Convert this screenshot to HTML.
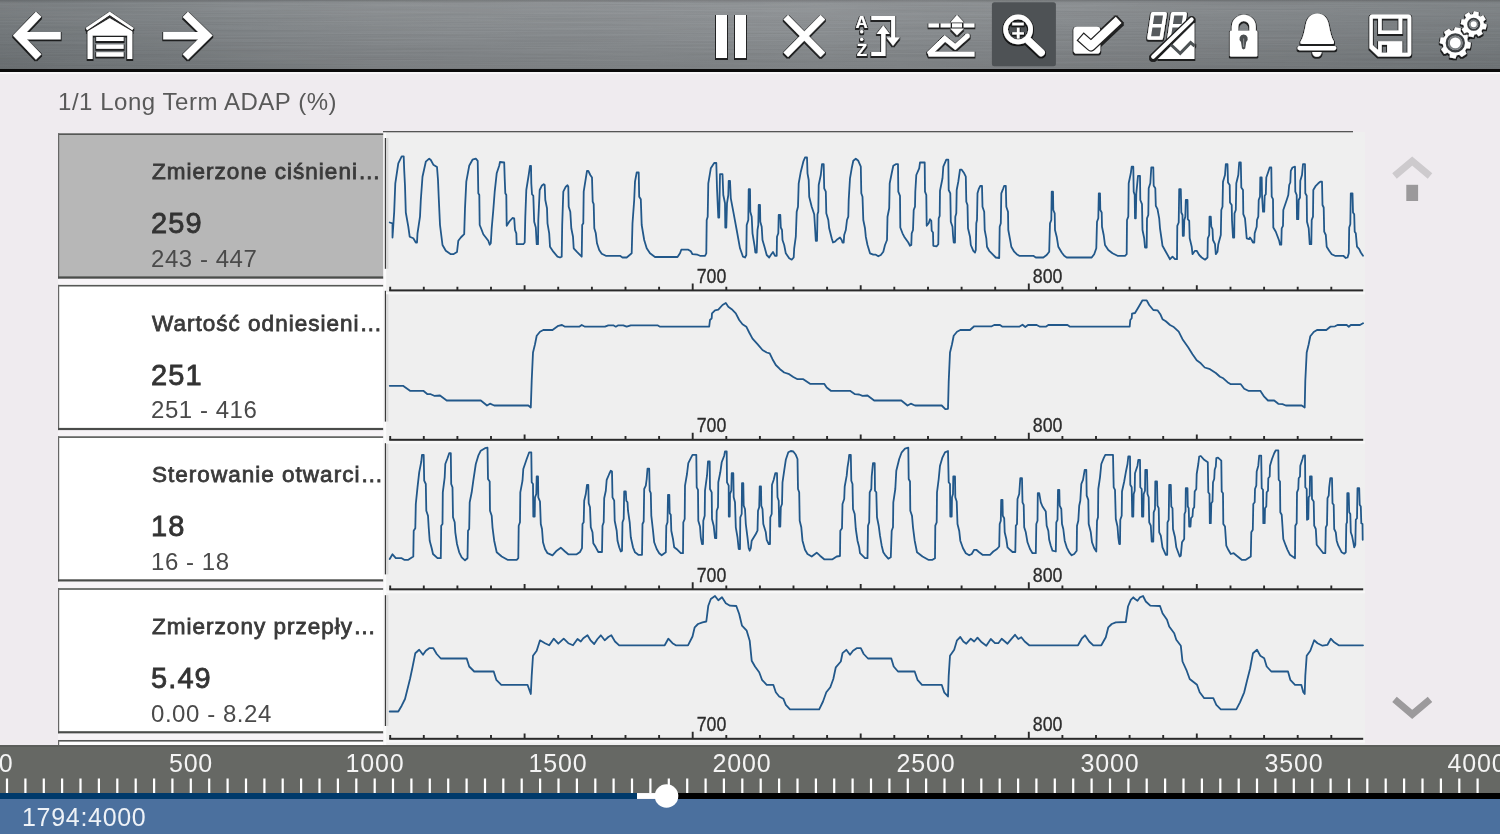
<!DOCTYPE html>
<html lang="pl">
<head>
<meta charset="utf-8">
<title>1/1 Long Term ADAP (%)</title>
<style>
html,body{margin:0;padding:0}
body{width:1500px;height:834px;overflow:hidden;position:relative;background:#efebef;font-family:"Liberation Sans",sans-serif;color:#333}
#title,.panel div,#ruler span,#status span{will-change:transform}
#toolbar{position:absolute;left:0;top:0;width:1500px;height:70px;background:linear-gradient(rgba(0,0,0,.18),rgba(0,0,0,0) 3px),linear-gradient(rgba(255,255,255,.07),rgba(255,255,255,0) 45%,rgba(0,0,0,.09)),linear-gradient(90deg,#767b7e 0,#7c8184 8%,#898d90 25%,#8e9295 55%,#868a8d 75%,#7b8083 100%)}
#tbline{position:absolute;left:0;top:69px;width:1500px;height:3px;background:#0b0b0b}
#tbhl{position:absolute;left:0;top:72px;width:1500px;height:2px;background:#f8f6f8}
#title{position:absolute;left:58px;top:87px;font-size:24px;line-height:30px;color:#595959;white-space:nowrap;letter-spacing:.54px}
.panel{position:absolute;left:58px;width:325px;height:145px}
.panel .nm{position:absolute;left:94px;top:25px;font-size:22.5px;line-height:28px;letter-spacing:1.02px;-webkit-text-stroke:.8px #3a3a3a;color:#3a3a3a;white-space:nowrap}
.panel .val{position:absolute;left:93px;top:72.8px;font-size:29px;line-height:34px;letter-spacing:1.1px;-webkit-text-stroke:.8px #333;color:#333;white-space:nowrap}
.panel .rng{position:absolute;left:93px;top:111.6px;font-size:24px;line-height:28px;letter-spacing:.55px;color:#4a4a4a;white-space:nowrap}
#chartbg{position:absolute;left:386px;top:132px;width:979px;height:613px;background:#efefef}
#ruler{position:absolute;left:0;top:745px;width:1500px;height:48px;background:linear-gradient(#5b5d5a,#5b5d5a 1.5px,#666864 2.5px)}
#ruler span{position:absolute;top:3px;font-size:25px;line-height:30px;color:#f4f4f4;white-space:nowrap;transform:translateX(-50%);letter-spacing:.8px}
#status{position:absolute;left:0;top:799px;width:1500px;height:35px;background:#4b709e}
#status span{position:absolute;left:22px;top:3px;font-size:25px;line-height:30px;letter-spacing:.7px;color:#eef2f7}
svg{position:absolute;left:0;top:0}
</style>
</head>
<body>
<div id="toolbar"></div>
<svg width="1500" height="70" viewBox="0 0 1500 70" style="opacity:.05"><filter id="br" x="0" y="0" width="100%" height="100%"><feTurbulence type="fractalNoise" baseFrequency="0.006 0.7" numOctaves="2" seed="7"/><feColorMatrix type="matrix" values="0 0 0 0 0  0 0 0 0 0  0 0 0 0 0  2.2 0 0 0 -0.6"/></filter><rect width="1500" height="70" filter="url(#br)"/></svg>
<div id="tbline"></div><div id="tbhl"></div>
<svg width="1500" height="72" viewBox="0 0 1500 72">
<defs><filter id="sh" x="-10%" y="-10%" width="125%" height="125%"><feMorphology in="SourceAlpha" operator="dilate" radius="0.55" result="d"/><feGaussianBlur in="d" stdDeviation="0.5" result="b"/><feOffset in="b" dx="0.35" dy="0.6" result="o"/><feComponentTransfer in="o" result="s"><feFuncA type="linear" slope="0.75"/></feComponentTransfer><feMerge><feMergeNode in="s"/><feMergeNode in="SourceGraphic"/></feMerge></filter><clipPath id="c88"><polygon points="1140,5 1201.5,5 1155.2,50 1140,50"/></clipPath></defs>
<rect x="991.9" y="2.2" width="64" height="64" rx="2.5" fill="#4e5255"/>
<g filter="url(#sh)" fill="#fff" stroke="none">
<path d="M38.6 14.3L18.2 35.6L38.6 56.9M18 35.6H60.6" fill="none" stroke="#fff" stroke-width="7.4" stroke-linejoin="miter" stroke-miterlimit="6"/>
<path d="M185.4 14.3L207.2 35.6L185.4 56.9M207.4 35.6H163.3" fill="none" stroke="#fff" stroke-width="7.4" stroke-linejoin="miter" stroke-miterlimit="6"/>
<path d="M86.6 29.2L109.7 13.6L132.8 29.2" fill="none" stroke="#fff" stroke-width="2.9"/>
<path d="M87 31.3L109.7 16.1L132.6 31.3" fill="none" stroke="#2c2c2c" stroke-width="1.5" filter="none"/>
<path d="M87.7 59V31.2L109.7 18.2L132.2 31.2V59H127.3V35.6H92.5V59Z"/>
<path d="M96.3 36.9h27.2v4.2h-27.2zM96.3 44.6h27.2v4.2h-27.2zM96.3 52.3h27.2v4.3h-27.2z"/>
<rect x="716" y="15" width="11" height="43"/><rect x="735" y="15" width="11" height="43"/>
<path d="M785.8 17.3L822.8 54.8M822.8 17.3L785.8 54.8" fill="none" stroke="#fff" stroke-width="6.3"/>
<text x="861.6" y="27.6" text-anchor="middle" font-family="Liberation Sans, sans-serif" font-weight="bold" font-size="17">A</text>
<text x="861.9" y="56" text-anchor="middle" font-family="Liberation Sans, sans-serif" font-weight="bold" font-size="17">Z</text>
<circle cx="861.7" cy="31.7" r="1.6"/><circle cx="861.7" cy="39.3" r="1.6"/>
<path d="M871.4 16.1H895.1V37.6H899.6L893 45.8L886.6 37.6H891.2V20H871.4Z"/>
<path d="M928.6 23.6h10.3v3.6h-10.3zM940.8 23.6h9.7v3.6h-9.7zM952 23.6h10v3.6h-10zM963.8 23.6h10.5v3.6h-10.5z"/>
<path d="M957 15L963.6 22.2H950.6ZM957 35.2L963.6 28.7H950.6Z"/>
<path d="M974.4 54.05H928.9L944.8 38.5" fill="none" stroke="#fff" stroke-width="4.7" stroke-linejoin="bevel"/>
<path d="M928.9 54.05L944.8 38.5L955.2 46.9L967.4 35.9" fill="none" stroke="#fff" stroke-width="4.7" stroke-linejoin="miter" stroke-miterlimit="8"/>
<circle cx="967.4" cy="35.9" r="2.35"/>
<circle cx="1018.1" cy="29.4" r="12.5" fill="none" stroke="#fff" stroke-width="4.7"/>
<path d="M1029 41.2L1041.2 52.6" fill="none" stroke="#fff" stroke-width="7.3" stroke-linecap="round"/>
<path d="M1012.3 22.8h11.4v2.4h-11.4zM1012.3 32.3h11.6v2.3h-11.6zM1016.9 27.8h2.6v10.8h-2.6z"/>
</g>
<g filter="url(#sh)" fill="#fff"><path d="M871.4 56H885.4V34H889.6L883.3 25.6L876.6 34H881.2V52H871.4Z"/></g>
<g filter="url(#sh)">
<rect x="1073.6" y="26.8" width="26.6" height="26.8" rx="3.4" fill="#fff"/>
<path d="M1080.1 36.4L1091 46L1119.6 19.1" fill="none" stroke="#222" stroke-width="10.8" stroke-linejoin="round"/>
<path d="M1081 37.2L1091 46L1118.7 19.9" fill="none" stroke="#fff" stroke-width="8.4" stroke-linejoin="round"/>
</g>
<g filter="url(#sh)">
<g clip-path="url(#c88)"><path d="M1152.7 13.8L1165.1 13.8L1161.2 38.0L1149.0 38.0ZM1150.8 25.8L1163.2 25.8M1172.7 13.8L1185.1 13.8L1181.2 38.0L1169.0 38.0ZM1170.8 25.8L1183.2 25.8" fill="#565a5d" stroke="#fff" stroke-width="3.6" stroke-linejoin="round"/></g>
<path d="M1158 58.9H1194.3V22.9Z" fill="#fff"/>
<path d="M1171.3 45L1180.2 53.3L1190.6 42.6L1194.6 46" fill="none" stroke="#4e5255" stroke-width="3"/>
<path d="M1153.2 56.8L1191.6 19.5" fill="none" stroke="#1c1c1c" stroke-width="6.0" stroke-linecap="round"/>
<path d="M1153.2 56.8L1191.6 19.5" fill="none" stroke="#fff" stroke-width="4.2" stroke-linecap="round"/>
</g>
<g filter="url(#sh)">
<path d="M1235 31.5V26.7A8.8 8.8 0 0 1 1252.6 26.7V31.5" fill="none" stroke="#fff" stroke-width="6.4"/>
<rect x="1229.9" y="30.8" width="27.4" height="25.6" rx="1.2" fill="#fff"/>
</g>
<path d="M1243.6 34.6a4.1 4.1 0 0 1 2.6 7.3L1245.2 48.6L1243.6 49.6L1242 48.6L1241 41.9a4.1 4.1 0 0 1 2.6-7.3Z" fill="#4a4e50"/>
<path d="M1243.6 38.5v8.6" stroke="#85898b" stroke-width="1.2" fill="none"/>
<g filter="url(#sh)" fill="#fff">
<path d="M1300.6 41.6C1303.2 37.6 1304.6 31 1305.7 25C1307.2 17 1311.8 13.6 1317.3 13.6C1322.8 13.6 1327.3 17 1328.8 25C1329.9 31 1331.3 37.6 1333.9 41.6Q1334.7 44.1 1332.3 44.1H1302.2Q1299.8 44.1 1300.6 41.6Z"/>
<rect x="1297.5" y="45.9" width="38.8" height="4.3" rx="2.1"/>
<path d="M1312.2 52H1321.6Q1321 56.8 1316.9 56.8Q1312.8 56.8 1312.2 52Z"/>
</g>
<g filter="url(#sh)">
<path fill="#fff" fill-rule="evenodd" d="M1372.5 14.6H1408.2Q1411.2 14.6 1411.2 17.6V53.4Q1411.2 56.4 1408.2 56.4H1378.2L1369.5 48.2V17.6Q1369.5 14.6 1372.5 14.6ZM1372.8 18.6H1378.1V34.1H1402.2V18.6H1407.6V52.8H1402.2V41.3H1378.1V50L1372.8 45.2ZM1381.7 18.6H1398.6V30.5H1381.7ZM1381.7 44.8H1387.1V52.8H1381.7Z"/>
</g>
<g filter="url(#sh)">
<path fill="#fff" d="M1467.7 41.6 L1470.9 42.7 L1469.9 48.4 L1466.6 48.3 L1465.0 50.8 L1466.5 53.8 L1461.7 57.1 L1459.4 54.7 L1456.6 55.3 L1455.5 58.5 L1449.8 57.5 L1449.9 54.2 L1447.4 52.6 L1444.4 54.1 L1441.1 49.3 L1443.5 47.0 L1442.9 44.2 L1439.7 43.1 L1440.7 37.4 L1444.0 37.5 L1445.6 35.0 L1444.1 32.0 L1448.9 28.7 L1451.2 31.1 L1454.0 30.5 L1455.1 27.3 L1460.8 28.3 L1460.7 31.6 L1463.2 33.2 L1466.2 31.7 L1469.5 36.5 L1467.1 38.8Z"/></g><g filter="url(#sh)"><path fill="#fff" d="M1483.8 23.6 L1486.7 24.6 L1485.7 29.3 L1482.6 29.0 L1481.3 31.0 L1482.7 33.7 L1478.6 36.3 L1476.7 33.9 L1474.4 34.4 L1473.4 37.3 L1468.7 36.3 L1469.0 33.2 L1467.0 31.9 L1464.3 33.3 L1461.7 29.2 L1464.1 27.3 L1463.6 25.0 L1460.7 24.0 L1461.7 19.3 L1464.8 19.6 L1466.1 17.6 L1464.7 14.9 L1468.8 12.3 L1470.7 14.7 L1473.0 14.2 L1474.0 11.3 L1478.7 12.3 L1478.4 15.4 L1480.4 16.7 L1483.1 15.3 L1485.7 19.4 L1483.3 21.3Z"/></g>
<circle cx="1455.3" cy="42.9" r="8.4" fill="none" stroke="#3c4043" stroke-width="2.5"/>
<circle cx="1455.3" cy="42.9" r="6.4" fill="none" stroke="#7b7f82" stroke-width="1.9"/>
<circle cx="1473.7" cy="24.3" r="5.5" fill="none" stroke="#3c4043" stroke-width="2.1"/>
<circle cx="1473.7" cy="24.3" r="3.8" fill="none" stroke="#7b7f82" stroke-width="1.5"/>
</svg>
<div id="title">1/1 Long Term ADAP (%)</div>
<div id="chartbg"></div>
<svg width="1500" height="834" viewBox="0 0 1500 834"><rect x="58" y="133.4" width="325.4" height="145.4" fill="#b7b7b7"/><rect x="58" y="133.4" width="325.4" height="1.6" fill="#555755"/><rect x="58" y="133.4" width="1.2" height="145.4" fill="#666"/><rect x="58" y="276.4" width="325.4" height="2.4" fill="#4a4c4a"/><rect x="58" y="278.8" width="325.4" height="6.2" fill="#f7f4f7"/><rect x="58" y="284.9" width="325.4" height="145.4" fill="#fff"/><rect x="58" y="284.9" width="325.4" height="1.6" fill="#555755"/><rect x="58" y="284.9" width="1.2" height="145.4" fill="#666"/><rect x="58" y="427.9" width="325.4" height="2.4" fill="#4a4c4a"/><rect x="58" y="430.3" width="325.4" height="6.2" fill="#f7f4f7"/><rect x="58" y="436.3" width="325.4" height="145.4" fill="#fff"/><rect x="58" y="436.3" width="325.4" height="1.6" fill="#555755"/><rect x="58" y="436.3" width="1.2" height="145.4" fill="#666"/><rect x="58" y="579.3" width="325.4" height="2.4" fill="#4a4c4a"/><rect x="58" y="581.7" width="325.4" height="6.2" fill="#f7f4f7"/><rect x="58" y="588.2" width="325.4" height="145.4" fill="#fff"/><rect x="58" y="588.2" width="325.4" height="1.6" fill="#555755"/><rect x="58" y="588.2" width="1.2" height="145.4" fill="#666"/><rect x="58" y="731.2" width="325.4" height="2.4" fill="#4a4c4a"/><rect x="58" y="733.6" width="325.4" height="6.2" fill="#f7f4f7"/><rect x="58" y="740.0" width="325.4" height="8.0" fill="#fff"/><rect x="58" y="740.0" width="325.4" height="1.6" fill="#555755"/><rect x="58" y="740.0" width="1.2" height="8.0" fill="#666"/></svg>
<div class="panel" style="top:133.4px"><div class="nm">Zmierzone ciśnieni…</div><div class="val">259</div><div class="rng">243 - 447</div></div>
<div class="panel" style="top:284.9px"><div class="nm">Wartość odniesieni…</div><div class="val">251</div><div class="rng">251 - 416</div></div>
<div class="panel" style="top:436.3px"><div class="nm">Sterowanie otwarci…</div><div class="val">18</div><div class="rng">16 - 18</div></div>
<div class="panel" style="top:588.2px"><div class="nm">Zmierzony przepły…</div><div class="val">5.49</div><div class="rng">0.00 - 8.24</div></div>
<svg width="1500" height="834" viewBox="0 0 1500 834">
<rect x="383.4" y="132" width="2.8" height="613" fill="#fbfbfb"/>
<rect x="383" y="131" width="970" height="1.3" fill="#555"/>
<rect x="384.8" y="138.0" width="1.3" height="130.8" fill="#3c3c3c"/>
<rect x="386.2" y="138.0" width="2.2" height="130.8" fill="#d9d9d9"/>
<rect x="384.8" y="290.8" width="1.3" height="130.8" fill="#3c3c3c"/>
<rect x="386.2" y="290.8" width="2.2" height="130.8" fill="#d9d9d9"/>
<rect x="384.8" y="443.2" width="1.3" height="131.2" fill="#3c3c3c"/>
<rect x="386.2" y="443.2" width="2.2" height="131.2" fill="#d9d9d9"/>
<rect x="384.8" y="595.2" width="1.3" height="130.8" fill="#3c3c3c"/>
<rect x="386.2" y="595.2" width="2.2" height="130.8" fill="#d9d9d9"/>
<rect x="386" y="291.7" width="979" height="2.6" fill="#f7f7f7"/>
<rect x="389.2" y="289.4" width="974" height="2" fill="#2a2a2a"/>
<path d="M390.2 290.4v-3.7M423.8 290.4v-3.7M457.4 290.4v-3.7M491.0 290.4v-3.7M524.6 290.4v-5.2M558.2 290.4v-3.7M591.9 290.4v-3.7M625.5 290.4v-3.7M659.1 290.4v-3.7M692.7 290.4v-7.0M726.3 290.4v-3.7M759.9 290.4v-3.7M793.5 290.4v-3.7M827.1 290.4v-3.7M860.7 290.4v-5.2M894.3 290.4v-3.7M928.0 290.4v-3.7M961.6 290.4v-3.7M995.2 290.4v-3.7M1028.8 290.4v-7.0M1062.4 290.4v-3.7M1096.0 290.4v-3.7M1129.6 290.4v-3.7M1163.2 290.4v-3.7M1196.8 290.4v-5.2M1230.5 290.4v-3.7M1264.1 290.4v-3.7M1297.7 290.4v-3.7M1331.3 290.4v-3.7" stroke="#2a2a2a" stroke-width="1.9" fill="none"/>
<text x="696.7" y="282.8" font-family="Liberation Sans, sans-serif" font-size="21" textLength="29.6" lengthAdjust="spacingAndGlyphs" fill="#2c2c2c" stroke="#2c2c2c" stroke-width="0.35">700</text>
<text x="1032.8" y="282.8" font-family="Liberation Sans, sans-serif" font-size="21" textLength="29.6" lengthAdjust="spacingAndGlyphs" fill="#2c2c2c" stroke="#2c2c2c" stroke-width="0.35">800</text>
<rect x="386" y="441.1" width="979" height="2.6" fill="#f7f7f7"/>
<rect x="389.2" y="438.8" width="974" height="2" fill="#2a2a2a"/>
<path d="M390.2 439.8v-3.7M423.8 439.8v-3.7M457.4 439.8v-3.7M491.0 439.8v-3.7M524.6 439.8v-5.2M558.2 439.8v-3.7M591.9 439.8v-3.7M625.5 439.8v-3.7M659.1 439.8v-3.7M692.7 439.8v-7.0M726.3 439.8v-3.7M759.9 439.8v-3.7M793.5 439.8v-3.7M827.1 439.8v-3.7M860.7 439.8v-5.2M894.3 439.8v-3.7M928.0 439.8v-3.7M961.6 439.8v-3.7M995.2 439.8v-3.7M1028.8 439.8v-7.0M1062.4 439.8v-3.7M1096.0 439.8v-3.7M1129.6 439.8v-3.7M1163.2 439.8v-3.7M1196.8 439.8v-5.2M1230.5 439.8v-3.7M1264.1 439.8v-3.7M1297.7 439.8v-3.7M1331.3 439.8v-3.7" stroke="#2a2a2a" stroke-width="1.9" fill="none"/>
<text x="696.7" y="432.2" font-family="Liberation Sans, sans-serif" font-size="21" textLength="29.6" lengthAdjust="spacingAndGlyphs" fill="#2c2c2c" stroke="#2c2c2c" stroke-width="0.35">700</text>
<text x="1032.8" y="432.2" font-family="Liberation Sans, sans-serif" font-size="21" textLength="29.6" lengthAdjust="spacingAndGlyphs" fill="#2c2c2c" stroke="#2c2c2c" stroke-width="0.35">800</text>
<rect x="386" y="590.6" width="979" height="2.6" fill="#f7f7f7"/>
<rect x="389.2" y="588.3" width="974" height="2" fill="#2a2a2a"/>
<path d="M390.2 589.3v-3.7M423.8 589.3v-3.7M457.4 589.3v-3.7M491.0 589.3v-3.7M524.6 589.3v-5.2M558.2 589.3v-3.7M591.9 589.3v-3.7M625.5 589.3v-3.7M659.1 589.3v-3.7M692.7 589.3v-7.0M726.3 589.3v-3.7M759.9 589.3v-3.7M793.5 589.3v-3.7M827.1 589.3v-3.7M860.7 589.3v-5.2M894.3 589.3v-3.7M928.0 589.3v-3.7M961.6 589.3v-3.7M995.2 589.3v-3.7M1028.8 589.3v-7.0M1062.4 589.3v-3.7M1096.0 589.3v-3.7M1129.6 589.3v-3.7M1163.2 589.3v-3.7M1196.8 589.3v-5.2M1230.5 589.3v-3.7M1264.1 589.3v-3.7M1297.7 589.3v-3.7M1331.3 589.3v-3.7" stroke="#2a2a2a" stroke-width="1.9" fill="none"/>
<text x="696.7" y="581.7" font-family="Liberation Sans, sans-serif" font-size="21" textLength="29.6" lengthAdjust="spacingAndGlyphs" fill="#2c2c2c" stroke="#2c2c2c" stroke-width="0.35">700</text>
<text x="1032.8" y="581.7" font-family="Liberation Sans, sans-serif" font-size="21" textLength="29.6" lengthAdjust="spacingAndGlyphs" fill="#2c2c2c" stroke="#2c2c2c" stroke-width="0.35">800</text>
<rect x="386" y="740.1" width="979" height="2.6" fill="#f7f7f7"/>
<rect x="389.2" y="737.8" width="974" height="2" fill="#2a2a2a"/>
<path d="M390.2 738.8v-3.7M423.8 738.8v-3.7M457.4 738.8v-3.7M491.0 738.8v-3.7M524.6 738.8v-5.2M558.2 738.8v-3.7M591.9 738.8v-3.7M625.5 738.8v-3.7M659.1 738.8v-3.7M692.7 738.8v-7.0M726.3 738.8v-3.7M759.9 738.8v-3.7M793.5 738.8v-3.7M827.1 738.8v-3.7M860.7 738.8v-5.2M894.3 738.8v-3.7M928.0 738.8v-3.7M961.6 738.8v-3.7M995.2 738.8v-3.7M1028.8 738.8v-7.0M1062.4 738.8v-3.7M1096.0 738.8v-3.7M1129.6 738.8v-3.7M1163.2 738.8v-3.7M1196.8 738.8v-5.2M1230.5 738.8v-3.7M1264.1 738.8v-3.7M1297.7 738.8v-3.7M1331.3 738.8v-3.7" stroke="#2a2a2a" stroke-width="1.9" fill="none"/>
<text x="696.7" y="731.2" font-family="Liberation Sans, sans-serif" font-size="21" textLength="29.6" lengthAdjust="spacingAndGlyphs" fill="#2c2c2c" stroke="#2c2c2c" stroke-width="0.35">700</text>
<text x="1032.8" y="731.2" font-family="Liberation Sans, sans-serif" font-size="21" textLength="29.6" lengthAdjust="spacingAndGlyphs" fill="#2c2c2c" stroke="#2c2c2c" stroke-width="0.35">800</text>
<path d="M389.7 222.5 L392.5 223.3 L392.5 237.5 L394.2 211.7 L395.3 183.3 L398.3 163.3 L401.7 156.3 L403.7 156.3 L404.2 170.0 L405.0 185.8 L405.8 212.5 L408.3 226.7 L409.7 236.7 L413.3 238.3 L415.8 242.5 L417.0 242.5 L417.5 233.3 L420.0 216.7 L420.8 200.0 L422.5 176.7 L425.8 161.7 L429.2 158.7 L430.8 160.0 L433.3 164.7 L437.0 167.0 L438.0 180.0 L438.7 196.7 L440.0 225.0 L442.5 245.0 L445.8 250.8 L450.8 254.2 L453.3 254.2 L457.0 252.0 L458.3 240.8 L460.8 237.5 L464.2 234.2 L465.0 208.3 L466.3 181.7 L469.2 165.8 L472.5 159.7 L475.8 158.7 L477.7 160.8 L478.0 175.0 L478.3 193.3 L479.3 195.0 L479.7 225.0 L481.7 230.0 L483.3 234.2 L488.3 240.8 L489.7 244.7 L490.8 243.3 L491.7 228.3 L493.3 210.0 L494.7 191.7 L496.7 173.3 L499.2 165.8 L500.0 162.0 L504.2 162.5 L504.7 178.3 L505.3 193.3 L506.3 195.0 L506.7 225.8 L509.2 221.7 L512.5 218.0 L514.2 218.3 L515.0 230.0 L516.3 233.3 L516.7 244.2 L523.3 244.2 L524.7 242.5 L525.3 216.7 L526.3 190.0 L528.7 175.0 L530.0 165.8 L531.0 165.8 L531.3 183.3 L532.0 194.2 L533.3 195.8 L534.2 221.7 L535.8 227.5 L536.7 244.2 L538.0 244.2 L538.3 220.0 L539.7 190.0 L541.7 185.8 L543.7 184.2 L544.7 185.0 L545.3 200.0 L547.0 208.3 L547.5 223.3 L549.2 233.3 L550.0 246.7 L553.3 251.7 L557.5 256.7 L560.0 257.5 L561.7 256.7 L562.2 225.0 L563.3 191.7 L565.8 186.7 L567.5 185.3 L568.3 186.7 L568.7 206.7 L570.3 211.7 L571.3 228.3 L573.0 236.7 L573.7 248.3 L576.7 251.7 L581.7 256.7 L582.2 225.0 L583.3 223.3 L583.7 191.7 L585.8 178.3 L587.0 170.8 L588.3 170.8 L590.3 175.0 L592.0 177.5 L592.7 201.7 L593.7 204.2 L594.3 228.3 L595.8 233.3 L597.0 243.3 L599.2 250.0 L601.7 253.7 L605.8 255.8 L620.0 255.8 L622.5 257.5 L626.7 257.5 L631.7 253.3 L632.5 223.3 L634.2 200.0 L635.0 181.7 L636.7 172.5 L638.7 172.5 L639.2 196.7 L640.8 199.2 L641.7 225.0 L644.2 240.0 L646.7 248.3 L650.0 253.3 L655.0 257.0 L677.5 257.0 L680.0 253.3 L681.3 249.7 L688.3 249.7 L690.8 251.3 L692.5 254.2 L697.5 254.7 L700.0 255.8 L705.0 255.8 L706.3 253.3 L706.7 220.0 L707.7 216.7 L708.3 183.3 L710.8 168.3 L714.2 163.0 L716.3 163.0 L717.0 188.3 L718.3 217.5 L719.2 217.5 L720.0 174.2 L722.5 174.2 L723.3 195.0 L725.0 203.3 L725.3 227.5 L726.3 227.5 L727.0 203.3 L728.3 195.0 L728.7 180.8 L730.0 180.8 L730.8 198.3 L733.3 211.7 L736.7 230.0 L740.0 248.3 L743.0 256.7 L745.0 257.5 L746.3 255.0 L746.7 225.0 L748.3 220.0 L748.7 189.2 L750.0 189.2 L750.3 211.7 L751.7 216.7 L752.5 233.3 L754.7 246.7 L755.3 252.5 L756.7 252.5 L757.5 230.0 L758.3 225.0 L758.7 205.0 L760.0 205.0 L760.3 221.7 L761.7 226.7 L762.5 240.0 L764.2 245.8 L766.7 255.0 L769.2 257.5 L770.8 255.0 L773.0 252.0 L775.0 255.8 L776.7 255.8 L777.0 236.7 L778.3 233.3 L778.7 215.0 L780.3 215.0 L780.8 227.5 L782.0 230.0 L782.5 240.0 L784.2 245.0 L785.8 253.3 L789.2 258.3 L791.7 259.7 L793.7 257.5 L794.2 248.3 L795.8 236.7 L796.7 211.7 L798.0 206.7 L798.7 183.3 L800.8 171.7 L803.3 161.7 L805.0 157.5 L807.0 157.5 L807.5 173.3 L808.7 180.0 L809.2 196.7 L811.7 206.7 L814.2 214.2 L815.0 226.7 L815.8 240.8 L817.0 240.8 L817.5 214.2 L818.3 211.7 L818.7 185.0 L820.8 175.0 L822.0 164.2 L823.7 164.2 L824.2 188.3 L825.8 191.7 L826.3 213.3 L828.3 220.0 L829.2 228.3 L831.7 238.3 L833.0 242.5 L835.0 241.7 L837.5 239.2 L840.0 237.5 L841.7 240.0 L842.5 242.5 L843.7 242.5 L844.2 235.0 L845.8 230.0 L847.0 220.0 L848.3 216.7 L848.7 200.0 L850.0 178.3 L851.7 168.3 L853.3 160.8 L855.8 158.7 L858.3 160.8 L860.8 166.7 L861.3 193.3 L862.5 196.7 L863.3 220.0 L865.0 228.3 L865.8 236.7 L867.5 245.0 L870.0 253.3 L873.3 254.7 L875.8 254.7 L878.3 256.3 L880.8 255.0 L883.3 251.7 L885.0 245.0 L887.0 240.0 L887.5 216.7 L889.2 208.3 L889.7 183.3 L891.7 173.3 L893.3 165.8 L895.8 164.2 L898.0 164.2 L898.3 191.7 L900.0 195.8 L900.3 227.5 L902.5 233.3 L904.2 236.7 L908.3 242.5 L910.0 245.8 L911.3 245.0 L911.7 233.3 L913.0 230.0 L913.7 210.0 L915.0 206.7 L915.3 191.7 L916.3 175.0 L919.2 168.3 L920.0 162.5 L924.7 162.5 L925.0 191.7 L926.3 195.0 L926.7 225.8 L928.7 223.3 L930.0 219.2 L931.3 220.8 L931.7 230.8 L933.0 232.5 L933.3 245.8 L936.7 246.3 L938.3 244.2 L938.7 218.3 L939.7 215.8 L940.0 190.8 L942.5 178.3 L943.3 166.7 L946.3 159.7 L948.3 159.7 L948.7 190.0 L950.3 193.3 L950.8 221.7 L952.5 226.7 L953.0 235.0 L953.7 242.5 L955.0 242.5 L955.3 216.7 L956.3 213.3 L956.7 190.0 L958.3 181.7 L960.0 169.7 L961.7 169.7 L964.2 173.3 L965.8 176.7 L966.3 201.7 L967.5 205.0 L968.0 228.3 L970.0 236.7 L970.8 245.0 L973.3 250.8 L975.0 252.5 L975.8 250.0 L976.3 223.3 L977.0 220.0 L977.5 193.3 L978.7 189.2 L980.3 185.8 L982.0 185.8 L982.5 206.7 L984.2 211.7 L984.7 230.0 L986.3 238.3 L987.0 246.7 L989.2 250.8 L995.8 257.5 L999.2 258.0 L999.7 226.7 L1000.8 223.3 L1001.3 193.3 L1003.3 188.3 L1004.2 185.8 L1005.8 185.8 L1006.3 206.7 L1008.0 211.7 L1008.3 230.0 L1010.0 239.2 L1011.3 246.7 L1014.2 251.7 L1016.7 254.2 L1019.2 255.8 L1033.3 255.8 L1035.8 257.5 L1043.3 257.5 L1046.7 255.0 L1049.2 251.7 L1050.0 223.3 L1051.3 220.0 L1051.7 191.7 L1053.0 191.7 L1053.3 210.0 L1054.7 213.3 L1055.0 230.0 L1056.7 236.7 L1058.3 246.7 L1061.7 252.5 L1064.2 255.8 L1066.7 257.5 L1091.7 257.5 L1094.2 254.2 L1096.3 248.3 L1097.0 221.7 L1098.3 218.3 L1098.8 193.3 L1100.0 193.3 L1100.3 210.0 L1101.7 212.5 L1102.0 226.7 L1103.7 235.0 L1105.0 245.0 L1108.3 250.0 L1112.5 253.3 L1117.5 255.8 L1125.0 255.8 L1126.7 254.2 L1127.0 220.0 L1128.3 216.7 L1128.7 183.3 L1130.8 173.3 L1131.7 166.7 L1133.3 166.7 L1133.7 191.7 L1134.7 195.0 L1135.0 218.3 L1135.8 218.3 L1136.3 193.3 L1138.0 175.8 L1140.0 175.8 L1140.3 200.0 L1142.0 204.2 L1142.5 230.0 L1144.2 238.3 L1145.0 247.5 L1146.7 247.5 L1147.0 218.3 L1148.3 215.0 L1148.7 188.3 L1150.3 183.3 L1151.3 167.5 L1153.3 167.5 L1153.7 185.8 L1155.3 188.3 L1155.8 205.8 L1157.5 209.2 L1159.2 218.3 L1160.0 228.3 L1161.7 240.0 L1162.5 245.8 L1165.8 251.7 L1170.0 259.2 L1172.5 256.7 L1175.0 259.2 L1177.0 259.2 L1177.3 225.8 L1178.7 222.5 L1179.2 189.2 L1180.8 189.2 L1181.3 212.5 L1182.5 215.0 L1182.8 235.8 L1183.8 235.8 L1184.3 220.0 L1185.3 216.7 L1185.8 200.0 L1187.5 200.0 L1187.8 219.2 L1189.2 220.8 L1189.7 238.3 L1191.7 246.7 L1192.5 254.2 L1195.0 250.8 L1196.7 250.8 L1199.2 255.0 L1201.7 257.5 L1205.0 259.7 L1207.5 257.5 L1207.8 238.3 L1209.2 235.0 L1209.5 216.7 L1210.8 216.7 L1211.3 226.7 L1212.5 229.2 L1213.0 240.0 L1215.0 244.2 L1215.8 254.2 L1217.5 251.7 L1218.3 244.2 L1220.8 235.0 L1221.3 210.0 L1222.5 206.7 L1223.0 181.7 L1225.0 175.0 L1225.8 164.2 L1227.5 164.2 L1228.0 182.5 L1229.7 185.0 L1230.0 202.5 L1231.7 205.0 L1232.0 220.0 L1233.0 237.5 L1234.2 237.5 L1234.5 213.3 L1235.8 210.0 L1236.3 183.3 L1238.3 175.0 L1239.2 162.5 L1240.8 162.5 L1241.3 187.5 L1243.0 190.0 L1243.3 214.2 L1245.0 218.3 L1245.8 227.5 L1246.7 238.3 L1249.2 239.2 L1250.0 237.5 L1251.7 240.0 L1253.0 242.5 L1254.3 242.5 L1254.7 233.3 L1256.7 226.7 L1257.0 220.0 L1258.3 216.7 L1258.7 200.0 L1260.0 196.7 L1260.3 177.5 L1261.7 177.5 L1262.0 195.0 L1263.0 211.7 L1264.2 211.7 L1264.7 195.8 L1265.8 194.2 L1266.3 177.5 L1268.3 171.7 L1269.7 167.5 L1271.3 167.5 L1271.7 196.7 L1273.0 199.2 L1273.3 227.5 L1275.8 231.7 L1279.2 240.8 L1280.0 244.7 L1281.3 244.7 L1281.7 228.3 L1283.0 225.8 L1283.3 210.0 L1285.0 205.0 L1286.7 200.0 L1288.3 195.0 L1289.2 185.0 L1290.3 182.5 L1290.8 170.8 L1292.5 167.5 L1295.0 166.7 L1295.3 191.7 L1296.7 195.0 L1297.0 219.2 L1298.3 219.2 L1298.7 200.0 L1300.0 197.5 L1300.3 180.8 L1302.0 175.0 L1303.0 164.2 L1305.0 164.2 L1305.3 193.3 L1306.7 195.8 L1307.0 221.7 L1308.7 228.3 L1309.7 244.2 L1311.3 244.2 L1311.7 220.0 L1313.0 216.7 L1313.3 190.0 L1315.8 185.8 L1318.3 183.3 L1320.3 181.7 L1322.0 181.7 L1322.5 205.0 L1323.7 207.5 L1324.2 231.7 L1325.8 235.0 L1326.7 246.7 L1329.2 250.8 L1331.7 254.2 L1335.0 255.8 L1343.3 255.8 L1345.8 258.0 L1347.5 257.5 L1348.8 253.3 L1349.2 227.5 L1350.3 224.2 L1350.8 193.3 L1352.5 193.3 L1353.0 212.5 L1354.2 214.2 L1354.7 231.7 L1355.8 233.3 L1357.0 246.7 L1359.2 249.2 L1360.8 252.5 L1363.0 255.8" stroke="#22588a" stroke-width="1.8" fill="none" stroke-linejoin="round" stroke-linecap="round"/>
<path d="M389.7 385.8 L403.0 385.8 L410.0 390.8 L423.3 390.8 L427.5 394.2 L430.8 394.2 L434.2 395.8 L440.0 395.5 L446.7 400.5 L480.8 400.5 L487.0 405.5 L490.0 403.7 L494.2 405.5 L528.3 405.5 L530.8 407.5 L531.7 380.8 L533.0 352.5 L535.0 344.2 L536.7 335.8 L540.0 331.7 L543.3 330.0 L552.5 330.0 L558.3 325.8 L562.0 325.0 L565.0 326.7 L579.2 326.7 L581.7 325.0 L585.0 326.7 L605.0 326.7 L608.3 325.3 L613.3 325.3 L615.8 326.7 L618.3 325.3 L623.3 325.3 L626.7 326.7 L630.8 325.3 L635.0 325.3 L657.5 325.3 L660.0 326.7 L709.2 326.7 L710.0 320.0 L711.7 318.3 L712.0 313.3 L715.0 310.3 L718.3 309.7 L722.5 305.0 L725.8 303.0 L728.3 306.7 L731.7 309.2 L735.8 313.3 L739.2 320.0 L742.5 324.2 L746.3 326.7 L749.2 332.5 L752.5 338.7 L757.5 344.2 L762.5 350.0 L766.7 352.5 L769.7 353.3 L772.5 359.2 L775.8 365.0 L780.0 369.2 L784.2 372.5 L789.2 374.2 L793.3 377.0 L797.5 379.2 L803.3 379.2 L810.0 383.8 L824.2 383.8 L826.7 387.5 L830.8 390.8 L850.0 390.8 L855.0 394.2 L859.2 394.5 L862.5 395.8 L867.5 395.5 L874.2 400.5 L885.0 400.5 L901.3 400.5 L907.5 405.5 L910.8 403.7 L915.0 405.5 L941.7 405.5 L945.3 409.2 L948.0 408.8 L948.7 381.7 L950.0 352.5 L952.0 344.2 L953.7 335.8 L957.0 331.7 L960.3 330.0 L970.0 330.0 L974.2 326.3 L991.7 326.3 L994.2 325.0 L1000.0 325.0 L1002.5 326.7 L1019.2 326.7 L1022.5 324.7 L1025.3 327.0 L1028.0 325.0 L1036.7 325.0 L1040.0 326.7 L1045.8 326.7 L1048.3 325.0 L1067.5 325.0 L1070.0 326.7 L1129.7 326.7 L1130.3 320.0 L1131.7 318.3 L1132.0 313.7 L1135.0 313.0 L1138.3 307.5 L1142.5 300.3 L1146.7 300.3 L1149.2 305.0 L1153.3 310.0 L1157.5 310.3 L1160.3 314.2 L1162.5 319.2 L1165.8 321.3 L1170.0 325.0 L1173.3 326.7 L1178.7 331.7 L1182.5 339.2 L1188.3 347.5 L1192.5 354.2 L1196.7 360.3 L1200.8 363.3 L1204.7 367.5 L1210.0 369.2 L1215.8 373.0 L1220.0 376.7 L1223.3 378.3 L1227.5 382.2 L1230.8 384.2 L1240.8 384.2 L1244.2 388.7 L1248.3 390.8 L1260.3 390.8 L1264.2 396.7 L1268.0 400.5 L1274.2 400.5 L1278.3 403.8 L1282.5 404.2 L1285.8 405.5 L1301.7 405.5 L1304.7 407.5 L1305.3 380.8 L1306.7 352.5 L1308.7 344.2 L1310.3 336.3 L1313.7 332.0 L1317.0 330.0 L1326.3 330.0 L1330.3 326.7 L1335.0 326.3 L1337.5 325.0 L1346.7 325.0 L1348.8 326.7 L1350.8 325.0 L1360.0 325.0 L1363.0 323.3" stroke="#22588a" stroke-width="1.8" fill="none" stroke-linejoin="round" stroke-linecap="round"/>
<path d="M389.7 559.0 L392.5 554.3 L395.8 558.2 L401.7 558.2 L404.2 559.8 L408.3 559.8 L413.3 556.5 L413.7 530.7 L415.3 528.2 L415.8 504.0 L417.5 487.3 L419.2 472.3 L421.3 461.5 L422.0 454.8 L423.7 454.8 L424.2 480.7 L425.8 484.0 L426.3 510.7 L428.0 515.7 L428.7 527.3 L429.7 540.7 L431.7 548.2 L433.0 554.0 L437.5 558.2 L440.8 558.2 L441.2 525.7 L442.5 524.0 L442.8 492.3 L444.7 477.3 L445.3 464.0 L447.5 458.2 L449.2 453.2 L450.8 453.2 L451.2 484.0 L452.5 487.3 L453.0 517.3 L454.7 522.3 L455.3 532.3 L457.0 544.0 L459.2 552.3 L461.7 557.3 L465.0 560.3 L467.5 558.2 L468.0 530.7 L469.2 529.0 L469.7 502.3 L471.7 492.3 L473.3 480.7 L475.8 464.0 L478.3 455.7 L480.8 450.7 L485.0 448.2 L487.5 447.7 L488.0 479.0 L489.7 481.5 L490.0 510.7 L491.7 515.7 L492.5 527.3 L494.2 540.7 L496.7 552.3 L501.7 556.5 L507.5 559.8 L516.7 559.8 L518.3 558.2 L518.7 525.7 L520.0 522.3 L520.3 492.3 L522.5 480.7 L523.3 469.0 L526.7 459.0 L529.2 452.3 L531.3 452.3 L531.7 482.3 L533.0 484.0 L533.3 516.5 L534.7 516.5 L535.0 497.3 L536.3 494.0 L536.7 476.5 L538.0 476.5 L538.3 497.3 L540.0 501.5 L540.8 524.0 L542.0 529.0 L543.0 542.3 L545.0 549.0 L547.5 553.2 L552.5 555.3 L556.7 550.7 L560.8 547.7 L565.0 551.5 L568.3 554.3 L576.7 554.3 L580.0 552.0 L582.0 548.2 L582.5 524.0 L583.7 522.3 L584.2 500.7 L585.8 494.0 L587.0 484.8 L588.3 484.8 L588.7 503.2 L590.0 507.3 L590.8 527.3 L592.5 532.3 L593.3 543.2 L595.8 547.3 L598.3 552.0 L602.0 552.0 L602.5 525.7 L603.7 522.3 L604.2 498.2 L605.8 490.7 L606.7 479.8 L609.2 474.0 L610.8 470.7 L612.0 471.5 L612.5 497.3 L614.2 500.7 L614.7 520.7 L616.7 530.7 L617.5 540.7 L619.2 547.3 L620.8 551.5 L622.0 550.7 L622.5 522.3 L623.7 519.0 L624.2 491.5 L625.8 491.5 L626.3 500.7 L627.5 502.3 L628.0 510.7 L629.7 522.3 L630.8 537.3 L633.0 547.3 L635.0 552.3 L638.3 554.8 L642.0 554.8 L642.5 524.0 L643.7 521.5 L644.2 489.0 L645.8 485.7 L646.7 479.0 L647.5 468.7 L649.2 468.7 L649.7 490.7 L650.8 493.2 L651.3 515.7 L653.0 530.7 L654.2 542.3 L656.7 549.0 L659.2 553.2 L661.7 555.3 L665.8 552.3 L666.3 525.7 L667.5 522.3 L668.0 494.8 L669.3 494.8 L669.7 513.2 L670.8 514.8 L671.3 530.7 L673.0 539.0 L674.2 547.3 L677.5 549.8 L680.8 553.2 L683.0 553.2 L683.3 522.3 L684.7 519.0 L685.0 485.7 L687.0 474.0 L688.3 463.2 L690.8 458.2 L692.5 454.8 L696.3 454.8 L696.7 487.3 L698.0 489.8 L698.3 520.7 L700.0 526.5 L700.8 537.3 L702.0 544.0 L703.0 544.0 L703.3 520.7 L704.7 515.7 L705.0 490.7 L707.0 475.7 L708.0 461.5 L709.7 461.5 L710.0 489.0 L711.7 492.3 L712.0 519.0 L713.7 525.7 L715.0 538.2 L716.3 538.2 L716.7 510.7 L718.0 507.3 L718.3 482.3 L720.3 472.3 L721.7 462.3 L724.2 455.7 L725.0 451.5 L726.7 451.5 L727.0 482.3 L728.7 485.7 L728.8 516.5 L729.7 516.5 L730.0 494.0 L731.3 490.7 L731.7 473.2 L733.3 473.2 L733.7 497.3 L735.0 502.3 L735.8 527.3 L737.5 537.3 L738.7 549.0 L740.0 549.0 L740.3 517.3 L741.7 514.0 L742.0 483.2 L743.3 483.2 L743.7 505.7 L745.0 509.0 L745.8 524.0 L747.5 537.3 L748.7 548.2 L749.7 550.7 L750.8 548.2 L751.7 540.7 L755.8 534.0 L757.5 530.7 L758.0 510.7 L759.2 507.3 L759.7 486.5 L761.0 486.5 L761.3 505.7 L762.5 509.0 L763.3 524.0 L765.8 532.3 L766.7 539.8 L768.7 544.0 L770.0 544.0 L770.3 517.3 L771.7 514.0 L772.0 484.8 L773.7 479.8 L775.3 473.2 L777.0 473.2 L777.5 497.3 L778.7 500.7 L779.2 526.5 L780.3 526.5 L780.8 507.3 L782.0 504.0 L782.5 482.3 L784.2 470.7 L785.8 459.8 L788.3 452.3 L790.8 451.0 L793.3 451.5 L795.8 454.8 L797.5 459.0 L798.0 489.0 L799.2 492.3 L799.7 520.7 L801.3 527.3 L802.5 540.7 L805.0 549.8 L807.5 554.0 L811.7 556.5 L816.7 552.7 L820.0 555.7 L824.2 559.3 L832.5 559.3 L836.7 556.5 L840.0 556.0 L840.3 530.7 L842.0 528.2 L842.5 504.0 L844.2 499.0 L844.7 486.5 L846.7 475.7 L847.5 467.3 L848.7 459.8 L849.2 454.8 L850.8 454.8 L851.3 480.7 L852.5 484.0 L853.0 509.0 L854.7 514.0 L855.8 529.0 L857.5 540.7 L859.2 547.3 L860.0 553.2 L862.5 555.7 L865.0 558.2 L867.5 558.2 L868.0 525.7 L869.2 522.3 L869.7 492.3 L871.3 489.0 L871.7 476.5 L873.0 463.2 L874.7 463.2 L875.0 490.7 L876.3 492.3 L877.0 517.3 L878.7 525.7 L880.0 535.7 L881.7 545.7 L883.3 552.3 L885.0 554.8 L888.3 558.7 L890.8 557.3 L891.7 530.7 L893.0 527.3 L893.3 502.3 L895.3 489.0 L896.3 470.7 L899.2 459.0 L901.7 452.3 L905.0 448.7 L908.3 447.7 L908.7 479.0 L910.0 481.5 L910.3 510.7 L912.0 515.7 L913.0 527.3 L914.7 540.7 L917.0 552.3 L922.5 556.5 L928.3 559.8 L932.5 559.8 L935.0 558.2 L935.3 525.7 L936.7 522.3 L937.0 492.3 L938.7 479.0 L940.0 465.7 L942.5 457.3 L945.0 452.3 L948.0 451.0 L948.7 482.3 L950.0 484.0 L950.3 516.5 L951.7 516.5 L952.0 497.3 L953.0 494.0 L953.3 476.5 L955.0 476.5 L955.3 497.3 L956.7 501.5 L957.5 524.0 L959.2 530.7 L960.3 540.7 L963.0 548.2 L965.8 553.2 L969.2 555.3 L971.7 554.0 L974.2 549.8 L976.3 549.8 L979.2 552.3 L982.5 554.8 L990.0 554.8 L993.3 551.5 L997.0 549.0 L999.2 546.5 L999.7 524.0 L1000.8 520.7 L1001.2 499.8 L1002.5 499.8 L1002.8 515.7 L1004.2 518.2 L1004.7 532.3 L1006.3 539.0 L1007.5 547.3 L1010.0 549.8 L1012.5 552.0 L1015.3 552.0 L1015.8 525.7 L1017.0 524.0 L1017.5 499.0 L1019.2 494.0 L1020.3 478.2 L1022.0 478.2 L1022.5 502.3 L1023.7 504.8 L1024.2 527.3 L1025.8 532.3 L1027.5 542.3 L1030.0 549.0 L1032.5 553.2 L1035.8 553.2 L1036.3 524.0 L1037.5 520.7 L1037.8 493.2 L1039.2 493.2 L1040.8 502.3 L1042.5 506.5 L1045.8 511.5 L1046.7 525.7 L1048.3 530.7 L1049.2 539.8 L1050.8 545.7 L1052.5 550.7 L1055.8 551.5 L1056.3 522.3 L1057.5 519.8 L1058.0 489.8 L1059.3 489.8 L1059.7 505.7 L1061.3 509.0 L1062.0 524.0 L1063.3 529.0 L1064.7 540.7 L1066.7 547.3 L1069.2 552.3 L1071.7 555.3 L1074.2 554.0 L1076.7 550.7 L1077.0 525.7 L1078.3 520.7 L1079.2 505.7 L1080.3 500.7 L1081.3 484.0 L1083.0 479.8 L1084.7 469.8 L1086.3 469.8 L1086.7 495.7 L1088.3 499.8 L1088.7 524.0 L1090.8 532.3 L1092.0 542.3 L1094.2 548.2 L1096.3 551.5 L1097.0 520.7 L1098.0 517.3 L1098.3 489.0 L1100.0 477.3 L1101.3 464.0 L1103.7 458.2 L1105.3 454.8 L1113.0 454.8 L1113.7 487.3 L1115.0 489.8 L1115.8 519.0 L1117.5 526.5 L1118.3 537.3 L1119.2 544.0 L1120.0 544.0 L1120.3 519.8 L1121.7 515.7 L1122.0 491.5 L1124.2 481.5 L1125.8 472.3 L1127.5 464.0 L1128.3 456.5 L1130.0 456.5 L1130.3 484.8 L1131.7 487.3 L1132.2 516.5 L1133.3 516.5 L1133.7 494.0 L1134.7 490.7 L1135.0 473.2 L1137.5 465.7 L1138.3 459.8 L1140.0 459.8 L1140.3 487.3 L1141.7 489.0 L1142.0 516.5 L1143.3 516.5 L1143.7 494.0 L1145.0 490.7 L1145.3 469.8 L1147.0 469.8 L1147.5 494.0 L1148.7 497.3 L1149.2 522.3 L1150.8 525.7 L1151.7 541.5 L1153.3 541.5 L1153.7 512.3 L1155.0 509.0 L1155.3 481.5 L1157.0 481.5 L1157.5 505.7 L1158.7 508.2 L1159.2 532.3 L1160.8 535.7 L1162.5 547.3 L1165.8 554.8 L1167.2 554.8 L1167.5 522.3 L1168.7 519.8 L1169.2 484.8 L1170.8 484.8 L1171.3 506.5 L1172.5 508.2 L1173.0 529.0 L1175.0 537.3 L1176.3 547.3 L1179.7 556.5 L1180.8 555.7 L1182.0 542.3 L1184.2 539.0 L1184.5 514.0 L1185.5 511.5 L1185.8 488.2 L1187.5 488.2 L1187.8 506.5 L1188.7 508.2 L1189.2 526.5 L1190.5 526.5 L1191.0 518.2 L1192.5 516.5 L1193.0 509.0 L1194.2 507.3 L1194.7 491.5 L1196.3 489.0 L1196.7 474.0 L1198.3 464.0 L1199.2 456.5 L1200.8 456.0 L1204.2 459.8 L1207.8 462.3 L1208.3 492.3 L1209.5 494.0 L1209.8 523.2 L1210.8 523.2 L1211.3 503.2 L1212.5 501.5 L1213.0 482.3 L1214.2 479.0 L1214.7 469.8 L1215.8 466.5 L1216.3 458.2 L1218.0 457.7 L1221.3 460.7 L1221.7 491.5 L1223.0 493.2 L1223.3 524.0 L1225.0 526.5 L1226.3 545.7 L1228.3 549.8 L1230.8 554.0 L1233.7 553.2 L1236.7 555.7 L1241.7 559.8 L1245.8 559.8 L1250.8 556.5 L1251.3 532.3 L1252.8 529.8 L1253.3 504.0 L1254.7 502.3 L1255.0 489.0 L1256.3 485.7 L1256.7 471.5 L1258.3 465.7 L1259.2 455.7 L1261.2 455.7 L1261.7 488.2 L1263.0 489.8 L1263.3 523.2 L1264.7 523.2 L1265.0 508.2 L1266.3 506.5 L1266.7 492.3 L1268.0 490.7 L1268.3 478.2 L1269.7 476.5 L1270.0 465.7 L1272.0 459.0 L1274.2 453.2 L1275.8 450.3 L1278.3 450.3 L1278.7 479.8 L1280.0 481.5 L1280.3 512.3 L1281.7 514.8 L1282.5 526.5 L1283.3 539.0 L1285.8 545.7 L1287.5 549.8 L1290.0 554.8 L1295.0 558.2 L1295.3 525.7 L1296.7 523.2 L1297.0 492.3 L1298.3 489.0 L1298.7 478.2 L1300.0 476.5 L1300.3 465.7 L1302.5 459.0 L1303.3 455.7 L1305.0 455.3 L1305.3 487.3 L1306.7 489.0 L1307.0 519.8 L1308.3 519.0 L1308.7 497.3 L1309.7 495.7 L1310.0 476.5 L1311.7 476.5 L1312.0 499.0 L1313.7 501.5 L1314.2 525.7 L1315.8 529.0 L1316.7 544.8 L1320.0 549.0 L1323.3 553.2 L1325.3 553.2 L1325.8 527.3 L1327.0 524.8 L1327.5 498.2 L1328.7 495.7 L1329.2 487.3 L1330.3 478.2 L1332.0 478.2 L1332.5 503.2 L1333.7 504.8 L1334.2 529.0 L1335.8 532.3 L1336.7 540.7 L1338.3 545.7 L1341.7 552.3 L1344.2 553.7 L1345.8 552.3 L1346.3 524.0 L1347.0 522.3 L1347.3 493.2 L1348.7 493.2 L1349.2 512.3 L1350.3 514.0 L1350.8 532.3 L1352.0 535.7 L1353.3 542.3 L1354.2 547.3 L1355.3 544.8 L1355.8 519.8 L1357.0 518.2 L1357.5 488.2 L1359.2 488.2 L1359.7 504.8 L1360.8 506.5 L1361.3 523.2 L1362.5 524.0 L1362.7 539.8" stroke="#22588a" stroke-width="1.8" fill="none" stroke-linejoin="round" stroke-linecap="round"/>
<path d="M389.7 711.5 L398.3 711.5 L401.7 705.7 L405.0 699.0 L407.5 689.0 L410.0 679.0 L412.5 667.3 L415.3 653.2 L419.2 649.8 L423.0 654.8 L425.8 650.7 L429.2 648.2 L433.3 648.2 L436.7 654.0 L440.8 658.5 L466.7 658.5 L469.2 666.5 L474.2 671.5 L493.7 671.5 L496.3 679.8 L501.3 684.8 L527.5 684.8 L530.8 694.0 L531.7 675.7 L533.0 655.7 L536.7 650.7 L540.0 640.3 L545.0 643.2 L549.2 645.3 L553.7 638.7 L558.3 643.7 L563.7 638.7 L568.3 643.2 L573.0 645.3 L577.5 639.0 L580.8 641.5 L583.3 638.2 L587.5 635.3 L590.8 640.7 L594.2 644.0 L597.5 639.0 L600.8 635.3 L604.7 640.3 L608.3 637.0 L611.3 635.3 L615.0 641.5 L619.2 645.3 L635.0 645.3 L664.7 645.3 L668.3 638.7 L672.5 643.2 L675.8 645.3 L688.0 645.3 L692.5 636.5 L694.7 627.3 L698.0 624.0 L702.5 622.3 L706.3 621.5 L708.3 605.7 L710.8 599.0 L715.0 596.0 L718.3 600.3 L722.0 597.3 L725.8 603.2 L730.0 605.7 L736.3 606.0 L739.2 614.0 L742.0 625.7 L746.7 630.7 L749.7 640.7 L751.7 660.7 L755.0 666.5 L759.2 672.3 L762.0 679.8 L766.7 684.8 L773.3 684.8 L775.8 692.3 L779.2 696.5 L783.3 698.7 L785.8 704.8 L790.0 709.3 L819.2 709.3 L823.0 701.5 L826.3 692.3 L830.3 687.3 L833.3 679.0 L835.8 667.3 L840.8 661.5 L842.5 653.2 L846.3 649.8 L850.0 654.8 L853.0 650.7 L856.7 648.2 L860.8 648.2 L863.7 654.0 L868.0 658.5 L885.0 658.5 L891.3 658.5 L893.7 666.5 L898.0 671.5 L914.7 671.5 L917.5 679.8 L922.0 684.8 L941.7 684.8 L944.2 692.3 L948.0 696.5 L948.7 675.7 L950.0 655.7 L954.2 649.8 L957.0 640.3 L960.3 637.0 L963.3 641.5 L966.3 643.7 L970.8 638.7 L974.2 641.5 L977.5 637.7 L981.7 642.3 L986.3 645.7 L990.8 639.0 L995.0 643.2 L998.3 643.2 L1001.7 638.7 L1007.5 643.7 L1011.7 638.7 L1015.0 634.8 L1018.3 639.0 L1021.3 637.3 L1024.7 641.5 L1029.2 645.3 L1078.0 645.3 L1081.7 638.7 L1085.0 635.3 L1089.2 641.5 L1093.3 645.3 L1101.3 645.3 L1105.8 637.3 L1108.3 627.3 L1111.7 624.0 L1115.8 622.3 L1125.8 622.0 L1128.0 606.5 L1130.8 599.8 L1133.3 597.3 L1135.0 599.0 L1137.5 600.7 L1140.0 597.3 L1143.0 596.0 L1145.8 601.5 L1150.3 605.7 L1160.0 606.0 L1162.5 613.2 L1167.0 619.8 L1169.2 626.5 L1174.2 633.2 L1176.3 639.8 L1180.8 645.7 L1182.5 661.5 L1186.7 670.7 L1189.7 679.0 L1197.0 684.8 L1199.7 692.3 L1204.2 698.2 L1213.3 698.2 L1216.3 704.8 L1220.8 709.3 L1236.3 709.3 L1240.0 702.3 L1244.2 692.3 L1247.0 680.7 L1250.0 669.0 L1253.0 653.2 L1257.0 649.8 L1260.3 655.7 L1264.2 658.2 L1266.7 666.5 L1271.3 671.5 L1288.0 671.5 L1290.3 679.8 L1295.0 684.8 L1301.3 684.8 L1303.3 692.3 L1304.7 694.0 L1305.3 675.7 L1306.7 655.7 L1310.3 650.7 L1314.2 640.3 L1317.5 643.2 L1322.5 645.7 L1327.5 644.8 L1330.8 638.7 L1334.2 642.3 L1338.7 645.3 L1363.0 645.3" stroke="#22588a" stroke-width="1.8" fill="none" stroke-linejoin="round" stroke-linecap="round"/>
</svg>
<div id="ruler"><span style="left:6.0px">0</span><span style="left:190.6px">500</span><span style="left:374.5px">1000</span><span style="left:558.3px">1500</span><span style="left:742.1px">2000</span><span style="left:926.0px">2500</span><span style="left:1109.8px">3000</span><span style="left:1293.6px">3500</span><span style="left:1477.4px">4000</span></div>
<svg width="1500" height="834" viewBox="0 0 1500 834"><path d="M7.0 778.5V793M25.4 778.5V793M43.8 778.5V793M62.1 778.5V793M80.5 778.5V793M98.9 778.5V793M117.3 778.5V793M135.7 778.5V793M154.1 778.5V793M172.4 778.5V793M190.8 778.5V793M209.2 778.5V793M227.6 778.5V793M246.0 778.5V793M264.4 778.5V793M282.7 778.5V793M301.1 778.5V793M319.5 778.5V793M337.9 778.5V793M356.3 778.5V793M374.7 778.5V793M393.0 778.5V793M411.4 778.5V793M429.8 778.5V793M448.2 778.5V793M466.6 778.5V793M485.0 778.5V793M503.3 778.5V793M521.7 778.5V793M540.1 778.5V793M558.5 778.5V793M576.9 778.5V793M595.3 778.5V793M613.6 778.5V793M632.0 778.5V793M650.4 778.5V793M668.8 778.5V793M687.2 778.5V793M705.6 778.5V793M723.9 778.5V793M742.3 778.5V793M760.7 778.5V793M779.1 778.5V793M797.5 778.5V793M815.9 778.5V793M834.2 778.5V793M852.6 778.5V793M871.0 778.5V793M889.4 778.5V793M907.8 778.5V793M926.1 778.5V793M944.5 778.5V793M962.9 778.5V793M981.3 778.5V793M999.7 778.5V793M1018.1 778.5V793M1036.4 778.5V793M1054.8 778.5V793M1073.2 778.5V793M1091.6 778.5V793M1110.0 778.5V793M1128.4 778.5V793M1146.7 778.5V793M1165.1 778.5V793M1183.5 778.5V793M1201.9 778.5V793M1220.3 778.5V793M1238.7 778.5V793M1257.0 778.5V793M1275.4 778.5V793M1293.8 778.5V793M1312.2 778.5V793M1330.6 778.5V793M1349.0 778.5V793M1367.3 778.5V793M1385.7 778.5V793M1404.1 778.5V793M1422.5 778.5V793M1440.9 778.5V793M1459.3 778.5V793M1477.6 778.5V793" stroke="#fff" stroke-width="2.2" fill="none"/><rect x="0" y="793" width="637" height="6" fill="#003a6b"/><rect x="678" y="793" width="822" height="6" fill="#000"/><rect x="637" y="793.5" width="30" height="5" fill="#fff"/></svg>
<div id="status"><span>1794:4000</span></div>
<svg width="1500" height="834" viewBox="0 0 1500 834"><circle cx="666.5" cy="796" r="11.8" fill="#fff"/></svg>
<svg width="1500" height="834" viewBox="0 0 1500 834">
<path d="M1394.5 176L1412.2 161L1430 176" fill="none" stroke="#cdcacd" stroke-width="7" stroke-miterlimit="6"/>
<rect x="1406.3" y="184.8" width="11.8" height="16.2" fill="#9b999b"/>
<path d="M1394.5 699.3L1412.2 714.4L1430 699.3" fill="none" stroke="#9c9a9c" stroke-width="7" stroke-miterlimit="6"/>
</svg>
</body>
</html>
